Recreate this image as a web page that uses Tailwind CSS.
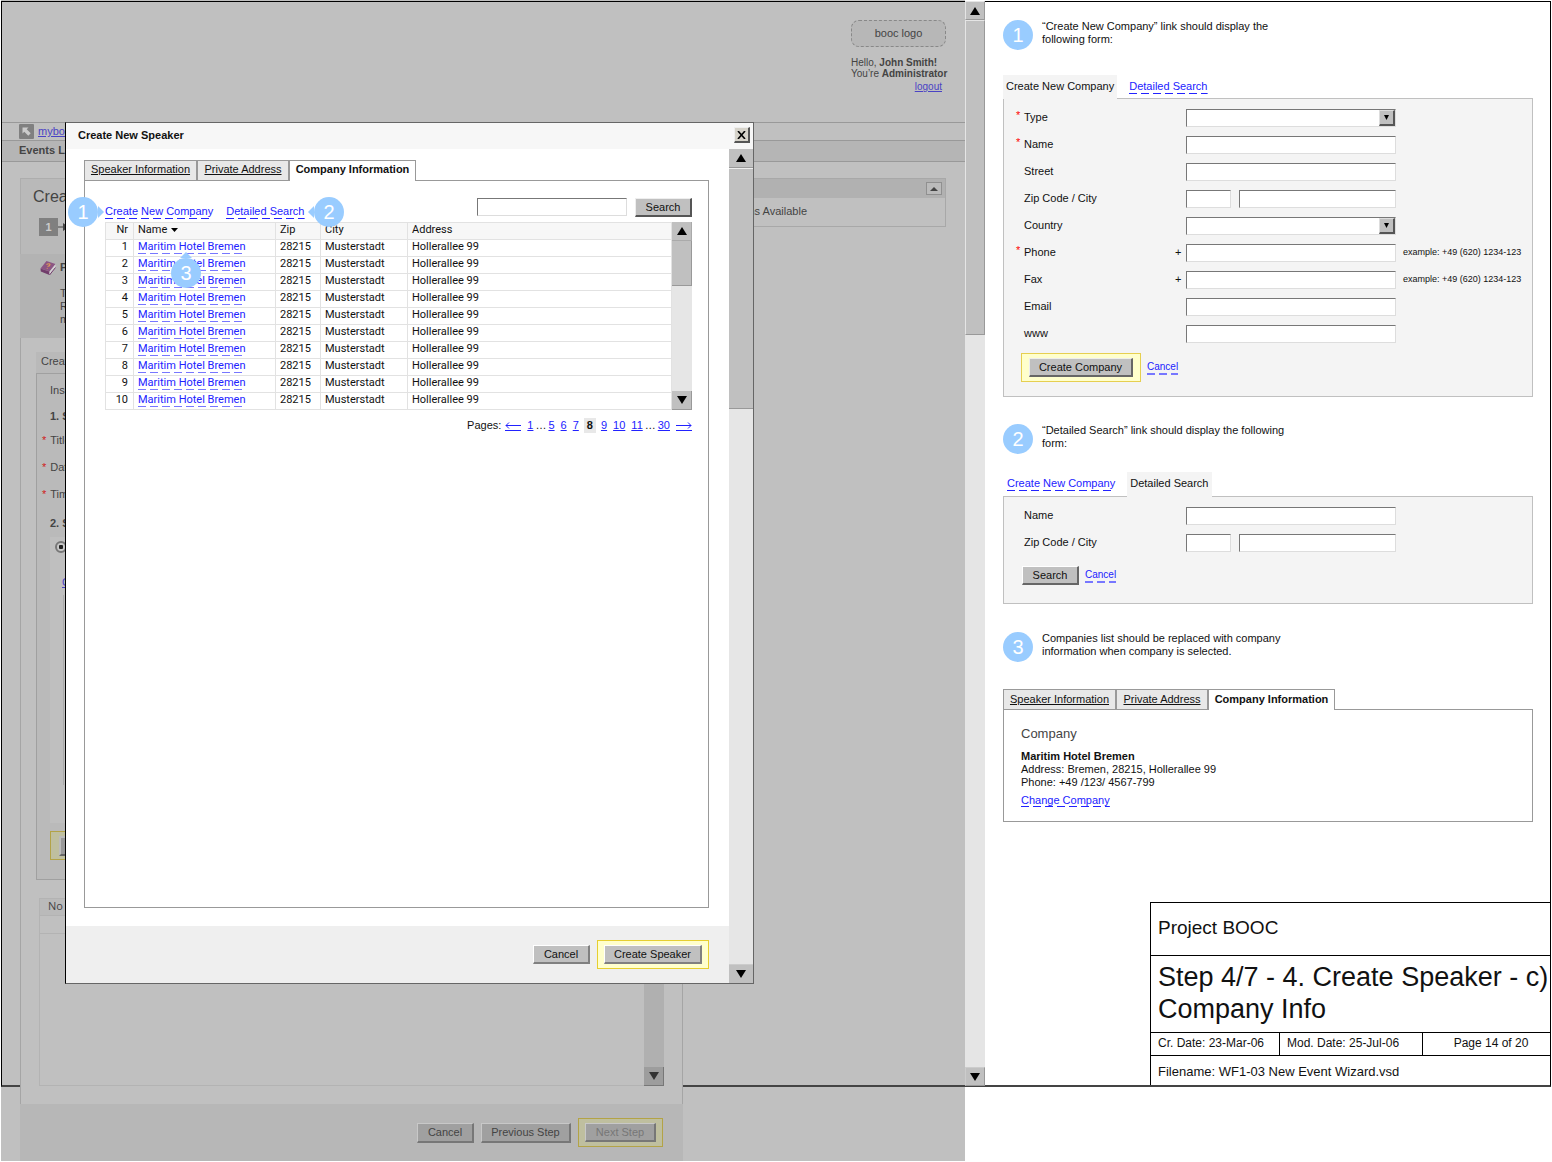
<!DOCTYPE html>
<html lang="en">
<head>
<meta charset="utf-8">
<title>Project BOOC - Create Speaker</title>
<script src="https://cdn.jsdelivr.net/npm/@tailwindcss/browser@4"></script>
</head>
<body class="bg-white font-['Liberation_Sans',Arial,sans-serif] text-[11px] leading-[13px] text-[#111]">
<div class="relative grid grid-cols-[minmax(0,964fr)_20px_minmax(0,567fr)] items-start pl-px">

  <!-- Drawing frame -->
  <div class="pointer-events-none absolute inset-x-px top-px h-[1086px] border border-b-2 border-black border-b-[#444]"></div>

  <!-- Dimmed application page -->
  <section class="min-h-[1161px] bg-[#c0c0c0] text-[#444]">
    <header class="flex h-[122px] justify-end pt-5 pr-[19px]">
      <div class="w-[95px]">
        <div class="flex h-[27px] items-center justify-center rounded-lg border border-dashed border-[#888] bg-[#b7b7b7]">booc logo</div>
        <p class="mt-[10px] text-[10px] leading-[11px] whitespace-nowrap">Hello, <b>John Smith!</b><br>You’re <b>Administrator</b></p>
        <p class="pr-1 text-right text-[10px] leading-[15px]"><a href="#" class="text-[#4a43c4] underline">logout</a></p>
      </div>
    </header>
    <nav class="border-y border-[#999]">
      <div class="flex h-[18px] items-center gap-1 border-b border-[#999] pl-[18px]">
        <svg class="h-[15px] w-[15px]" viewBox="0 0 15 15"><rect width="15" height="15" rx="1" fill="#808080"/><path d="M3.5 3.5h6L7.7 5.3l4 4-2.4 2.4-4-4-1.8 1.8z" fill="#ccc"/></svg>
        <a href="#" class="text-[#4a43c4] underline">mybooc</a>
      </div>
      <div class="flex h-5 items-center bg-[#b5b5b5] pb-[2px] pl-[18px] font-bold">Events List</div>
    </nav>
    <div class="flex items-start pt-[16px] pr-[19px] pl-[19px]">
      <div class="relative z-10 w-[663px] shrink-0 bg-[#c0c0c0]">
        <div class="h-[76px] border border-b-0 border-[#adadad] bg-[#b9b9b9] pl-3">
          <h1 class="pt-[9px] text-base leading-[18px]">Create Event</h1>
          <div class="mt-3 ml-[6px] flex items-center">
            <span class="flex h-[18px] w-[19px] items-center justify-center bg-[#808080] font-bold text-[#ccc]">1</span>
            <svg class="h-2 w-3" viewBox="0 0 12 8"><path d="M0 4h7" stroke="#444"/><path d="M5 0l6 4-6 4z" fill="#444"/></svg>
          </div>
        </div>
        <div class="flex h-[84px] gap-1 bg-[#b3b3b3] pt-[6px] pl-5">
          <svg class="h-4 w-4 shrink-0" viewBox="0 0 16 16"><path d="M0.500 8.500L6.500 1 15.500 4 9.500 11.500z" fill="#8c5583"/><path d="M0.500 8.500l9 3V15L0.800 11.500z" fill="#713d6b"/><path d="M9.500 11.800l6-7.500V7.500l-6 7.200z" fill="#d5d0d5"/><path d="M9.500 15l6-7.500" fill="none" stroke="#713d6b"/><path d="M6.500 4.500q3-1.500 3.500 0 0 1.500-2.500 2M6.800 8.300l.8.200" fill="none" stroke="#dc9a58" stroke-width="1.200"/></svg>
          <div>
            <b class="leading-[15px]">Please</b>
            <p class="mt-3">To<br>Re<br>me</p>
          </div>
        </div>
        <div class="border-x border-[#a5a5a5] pr-[18px] pl-[15px]">
          <div class="pt-[14px]">
            <div class="flex h-[21px] w-20 items-center bg-[#b9b9b9] pb-[2px] pl-[5px]">Create</div>
            <div class="h-[507px] border border-[#a0a0a0] bg-[#bababa] pl-[13px]">
              <p class="pt-[10px]">Insert</p>
              <p class="pt-[13px] font-bold">1. Set</p>
              <p class="-ml-2 pt-[11px]"><span class="mr-1 text-[#d02020]">*</span>Title</p>
              <p class="-ml-2 pt-[14px]"><span class="mr-1 text-[#d02020]">*</span>Date</p>
              <p class="-ml-2 pt-[14px]"><span class="mr-1 text-[#d02020]">*</span>Time</p>
              <p class="pt-4 font-bold">2. Set</p>
              <div class="mt-[7px] h-[286px] bg-[#bfbfbf] pt-1 pl-[5px]">
                <input type="radio" checked aria-label="Speaker" class="block h-3 w-3 appearance-none rounded-full border-2 border-[#777] bg-[radial-gradient(#222_0_35%,#c8c8c8_45%)]">
                <a href="#" class="mt-[23px] ml-[7px] block text-[#4a43c4] underline">C</a>
                <div class="mt-[6px] ml-2 h-[190px] border-l border-[#aaa]"></div>
              </div>
              <div class="mt-2 h-[29px] w-20 border border-[#b3a347] bg-[#bfbf9f] px-2 py-1">
                <div class="h-5 border-2 border-[#666] border-t-[#bbb] border-l-[#bbb] bg-[#999]"></div>
              </div>
            </div>
          </div>
          <div class="mt-[18px] ml-[3px] flex h-[188px]">
            <div class="flex-1 border border-r-0 border-[#b3b3b3]">
              <div class="h-[17px] border-b border-[#b3b3b3] bg-[#bababa] pl-2 font-['Open_Sans',sans-serif]">No</div>
              <div class="h-[18px] border-b border-[#b3b3b3]"></div>
            </div>
            <div class="flex w-5 flex-col justify-end bg-[#b0b0b0]">
              <div class="flex h-[19px] items-center justify-center border-r border-b border-[#777] bg-[#9d9d9d]"><svg class="h-2 w-[10px]" viewBox="0 0 10 8"><path d="M0 0h10L5 8z" fill="#333"/></svg></div>
            </div>
          </div>
          <div class="h-[18px]"></div>
        </div>
        <div class="flex h-[57px] items-start justify-end gap-[7px] bg-[#b7b7b7] pt-[14px] pr-5">
          <button class="mt-[5px] h-5 w-[57px] border-2 border-t border-l border-[#777] border-t-[#c8c8c8] border-l-[#c8c8c8] bg-[#a0a0a0]">Cancel</button>
          <button class="mt-[5px] h-5 w-[90px] border-2 border-t border-l border-[#777] border-t-[#c8c8c8] border-l-[#c8c8c8] bg-[#a0a0a0]">Previous Step</button>
          <div class="h-[29px] border border-[#b3a347] bg-[#bfbf9f] px-[6px] py-1">
            <button disabled class="h-[19px] w-[71px] border-2 border-t border-l border-[#777] border-t-[#c8c8c8] border-l-[#c8c8c8] bg-[#a0a0a0] text-[#777]">Next Step</button>
          </div>
        </div>
      </div>
      <aside class="ml-5 h-[49px] flex-1 border border-[#a8a8a8]">
        <div class="flex h-[19px] items-center justify-end bg-[#b1b1b1] pr-[3px]">
          <button aria-label="Collapse" class="flex h-[13px] w-4 items-center justify-center border border-[#909090] bg-[#bbb]"><svg class="h-1 w-2" viewBox="0 0 8 4"><path d="M4 0l4 4H0z" fill="#444"/></svg></button>
        </div>
        <p class="pt-[7px] pr-[138px] text-right whitespace-nowrap">No Options Available</p>
      </aside>
    </div>
  </section>

  <!-- Page scrollbar -->
  <div class="z-10 mt-px flex h-[1085px] flex-col bg-[#e5e5e5]">
    <div class="flex h-[19px] items-center justify-center border border-[#999] border-t-[#e5e5e5] border-l-[#e5e5e5] bg-[#c0c0c0]"><svg class="h-2 w-[10px]" viewBox="0 0 10 8"><path d="M5 0l5 8H0z"/></svg></div>
    <div class="h-[315px] border border-[#999] border-t-[#e5e5e5] border-l-[#e5e5e5] bg-[#c0c0c0]"></div>
    <div class="mt-auto flex h-[19px] items-center justify-center border border-[#999] border-t-[#ccc] border-l-[#ccc] bg-[#c0c0c0]"><svg class="h-2 w-[10px]" viewBox="0 0 10 8"><path d="M0 0h10L5 8z"/></svg></div>
  </div>

  <!-- Notes column -->
  <section class="flex h-[1086px] flex-col pr-px pl-[18px]">
    <div class="flex h-[75px] gap-[9px] pt-5">
      <span class="flex h-[30px] w-[30px] shrink-0 items-center justify-center rounded-full bg-[#99ccff] text-xl text-white">1</span>
      <p class="w-[250px]">“Create New Company” link should display the following form:</p>
    </div>
    <div class="pr-[18px]">
      <div class="flex h-[24px] items-start">
        <span class="relative h-6 bg-[#f4f4f4] px-[3px] pt-[5px]">Create New Company</span>
        <a href="#" class="mt-[5px] ml-3 bg-[repeating-linear-gradient(90deg,#2222ff_0_8px,transparent_8px_12px)] bg-[length:100%_1px] bg-bottom bg-no-repeat pb-px text-[#2222ff]">Detailed Search</a>
      </div>
      <form id="create" class="-mt-px h-[299px] border border-[#c0c0c0] bg-[#f4f4f4] pt-[5px] pl-3"></form>
    </div>

    <div class="mt-[27px] flex h-12 gap-[9px]">
      <span class="flex h-[30px] w-[30px] shrink-0 items-center justify-center rounded-full bg-[#99ccff] text-xl text-white">2</span>
      <p class="w-[250px]">“Detailed Search” link should display the following form:</p>
    </div>
    <div class="pr-[18px]">
      <div class="flex h-[24px] items-start pl-1">
        <a href="#" class="mt-[5px] mr-3 bg-[repeating-linear-gradient(90deg,#2222ff_0_8px,transparent_8px_12px)] bg-[length:100%_1px] bg-bottom bg-no-repeat pb-px text-[#2222ff]">Create New Company</a>
        <span class="relative h-[25px] bg-[#f4f4f4] px-[3px] pt-[5px]">Detailed Search</span>
      </div>
      <form id="search" class="h-[108px] border border-[#c0c0c0] bg-[#f4f4f4] pt-[5px] pl-3"></form>
    </div>

    <div class="mt-7 flex h-[57px] gap-[9px]">
      <span class="flex h-[30px] w-[30px] shrink-0 items-center justify-center rounded-full bg-[#99ccff] text-xl text-white">3</span>
      <p class="w-[250px]">Companies list should be replaced with company information when company is selected.</p>
    </div>
    <div class="pr-[18px]">
      <div class="flex h-5">
        <a href="#" class="w-[113px] border border-b-0 border-[#999] bg-[#e8e8e8] pt-[3px] text-center underline">Speaker Information</a>
        <a href="#" class="w-[92px] border border-b-0 border-[#999] bg-[#e8e8e8] pt-[3px] text-center underline">Private Address</a>
        <span class="relative h-[21px] w-[127px] border border-b-0 border-[#999] bg-white pt-[3px] text-center font-bold">Company Information</span>
      </div>
      <div class="h-[113px] border border-[#999] pt-4 pl-[17px]">
        <h2 class="text-[13px] leading-4 text-[#444]">Company</h2>
        <p class="pt-2"><b>Maritim Hotel Bremen</b><br>Address: Bremen, 28215, Hollerallee 99<br>Phone: +49 /123/ 4567-799</p>
        <p class="pt-[5px]"><a href="#" class="bg-[repeating-linear-gradient(90deg,#2222ff_0_8px,transparent_8px_12px)] bg-[length:100%_1px] bg-bottom bg-no-repeat pb-px text-[#2222ff]">Change Company</a></p>
      </div>
    </div>

    <div class="mt-auto ml-[147px] border-t border-l border-black text-xs">
      <p class="h-[53px] border-b border-black pt-[15px] pl-[7px] text-[19px] leading-5">Project BOOC</p>
      <h2 class="h-[77px] border-b border-black pt-[5px] pl-[7px] text-[27px] leading-8 whitespace-nowrap">Step 4/7 - 4. Create Speaker - c)<br>Company Info</h2>
      <div class="grid h-[23px] grid-cols-[128fr_143fr_129fr] border-b border-black leading-[21px]">
        <span class="pl-[7px]">Cr. Date: 23-Mar-06</span>
        <span class="border-l border-black pl-[7px]">Mod. Date: 25-Jul-06</span>
        <span class="border-l border-black pl-2 text-center">Page 14 of 20</span>
      </div>
      <p class="h-[30px] pt-[7px] pl-[7px] text-[13px]">Filename: WF1-03 New Event Wizard.vsd</p>
    </div>
  </section>

  <!-- Create New Speaker dialog -->
  <div role="dialog" aria-label="Create New Speaker" class="absolute top-[122px] left-[65px] z-20 flex h-[862px] w-[689px] flex-col border border-[#666] border-l-black bg-white">
    <div class="flex h-[26px] items-center justify-between bg-[#f7f7f7] pr-[3px] pb-[2px] pl-3">
      <h2 class="font-bold">Create New Speaker</h2>
      <button aria-label="Close" class="flex h-4 w-4 items-center justify-center border-2 border-t border-l border-[#555] border-t-[#eee] border-l-[#eee] bg-[#d6d3ca]"><svg class="h-2 w-[9px]" viewBox="0 0 9 8"><path d="M1 0l7 8M8 0L1 8" stroke="#000" stroke-width="1.600"/></svg></button>
    </div>
    <div class="flex flex-1">
      <div class="flex flex-1 flex-col">
        <div class="flex-1 pt-[11px] pr-5 pb-[18px] pl-[18px]">
          <div class="flex h-5">
            <a href="#" class="w-[113px] border border-b-0 border-[#999] bg-[#e8e8e8] pt-[2px] text-center underline">Speaker Information</a>
            <a href="#" class="w-[92px] border border-b-0 border-[#999] bg-[#e8e8e8] pt-[2px] text-center underline">Private Address</a>
            <span class="relative h-[21px] w-[127px] border border-b-0 border-[#999] bg-white pt-[2px] text-center font-bold">Company Information</span>
          </div>
          <div class="h-[728px] border border-[#999] pt-[17px] pr-4 pl-5">
            <div class="flex h-6 items-start">
              <a href="#" class="mt-[7px] bg-[repeating-linear-gradient(90deg,#2222ff_0_8px,transparent_8px_12px)] bg-[length:100%_1px] bg-bottom bg-no-repeat pb-px text-[#2222ff]">Create New Company</a>
              <a href="#" class="mt-[7px] ml-[13px] bg-[repeating-linear-gradient(90deg,#2222ff_0_8px,transparent_8px_12px)] bg-[length:100%_1px] bg-bottom bg-no-repeat pb-px text-[#2222ff]">Detailed Search</a>
              <input type="text" aria-label="Search companies" class="ml-auto h-[18px] w-[150px] border border-[#ddd] border-t-[#777] border-l-[#777] bg-white">
              <button class="ml-2 h-[19px] w-[57px] border-2 border-t border-l border-[#555] border-t-[#eee] border-l-[#eee] bg-[#c0c0c0]">Search</button>
            </div>
            <div class="flex">
              <table class="w-[567px] table-fixed border-collapse font-[Roboto,Tahoma,sans-serif] text-[11px] leading-[14px]">
                <colgroup><col class="w-7"><col class="w-[142px]"><col class="w-[45px]"><col class="w-[87px]"><col></colgroup>
                <thead><tr class="h-[17px] bg-[#f7f7f7] text-left align-top">
                  <th class="border border-[#e2e2e2] pr-[5px] text-right font-normal">Nr</th>
                  <th class="border border-[#e2e2e2] pl-1 font-normal">Name <svg class="ml-px inline h-1 w-[7px]" viewBox="0 0 7 4"><path d="M0 0h7L3.500 4z"/></svg></th>
                  <th class="border border-[#e2e2e2] pl-1 font-normal">Zip</th>
                  <th class="border border-[#e2e2e2] pl-1 font-normal">City</th>
                  <th class="border border-[#e2e2e2] pl-1 font-normal">Address</th>
                </tr></thead>
                <tbody id="rows"></tbody>
              </table>
              <div class="flex w-5 flex-col bg-[#e6e6e6]">
                <div class="flex h-[19px] items-center justify-center border-r border-b border-[#aaa] bg-[#c0c0c0]"><svg class="h-2 w-[10px]" viewBox="0 0 10 8"><path d="M5 0l5 8H0z"/></svg></div>
                <div class="h-[45px] border-r border-b border-[#999] bg-[#c0c0c0]"></div>
                <div class="mt-auto flex h-[19px] items-center justify-center border-r border-b border-[#999] bg-[#c0c0c0]"><svg class="h-2 w-[10px]" viewBox="0 0 10 8"><path d="M0 0h10L5 8z"/></svg></div>
              </div>
            </div>
            <div class="flex items-center justify-end pt-2 text-[#2222ff]">
              <span class="mr-1 text-[#111]">Pages:</span>
              <a href="#" aria-label="Previous" class="border-b border-[#2222ff] pt-[2px] pb-px"><svg class="h-[7px] w-4" viewBox="0 0 16 7"><path d="M1 3.500h15M4 .5L1 3.500l3 3" fill="none" stroke="#22f"/></svg></a>
              <a href="#" class="ml-[6px] underline">1</a><span class="mx-[2px] text-[#111]">…</span>
              <a href="#" class="underline">5</a><a href="#" class="ml-[6px] underline">6</a><a href="#" class="ml-[6px] underline">7</a>
              <b class="ml-[5px] bg-[#e8e8e8] px-[3px] py-px text-[#111]">8</b>
              <a href="#" class="ml-[5px] underline">9</a><a href="#" class="ml-[6px] underline">10</a><a href="#" class="ml-[6px] underline">11</a><span class="mx-[2px] text-[#111]">…</span><a href="#" class="underline">30</a>
              <a href="#" aria-label="Next" class="ml-[6px] border-b border-[#2222ff] pt-[2px] pb-px"><svg class="h-[7px] w-4" viewBox="0 0 16 7"><path d="M0 3.500h15M12 .5l3 3-3 3" fill="none" stroke="#22f"/></svg></a>
            </div>
          </div>
        </div>
        <div class="flex h-[57px] items-start justify-end gap-[7px] bg-[#efefef] pt-[14px] pr-5">
          <button class="mt-[5px] h-[19px] w-[57px] border-2 border-t border-l border-[#808080] border-t-white border-l-white bg-[#c0c0c0]">Cancel</button>
          <div class="h-[29px] border border-[#e6cf30] bg-[#ffffcc] px-[6px] py-1">
            <button class="h-[19px] w-[98px] border-2 border-t border-l border-[#808080] border-t-white border-l-white bg-[#c0c0c0]">Create Speaker</button>
          </div>
        </div>
      </div>
      <div class="flex w-6 flex-col bg-[#e6e6e6]">
        <div class="flex h-[19px] items-center justify-center border-b border-[#999] bg-[#c0c0c0]"><svg class="h-2 w-[10px]" viewBox="0 0 10 8"><path d="M5 0l5 8H0z"/></svg></div>
        <div class="h-[241px] border-t border-b border-[#999] border-t-[#eee] bg-[#c0c0c0]"></div>
        <div class="mt-auto flex h-[19px] items-center justify-center border-t border-[#ccc] bg-[#c0c0c0]"><svg class="h-2 w-[10px]" viewBox="0 0 10 8"><path d="M0 0h10L5 8z"/></svg></div>
      </div>
    </div>

    <!-- Callout markers -->
    <div class="absolute top-[74px] left-[2px] flex items-center">
      <span class="flex h-[30px] w-[30px] items-center justify-center rounded-full bg-[#99ccff] text-xl text-white">1</span>
      <svg class="h-3 w-[6px]" viewBox="0 0 6 12"><path d="M0 0l6 6-6 6z" fill="#9cf"/></svg>
    </div>
    <div class="absolute top-[74px] left-[242px] flex items-center">
      <svg class="h-3 w-[6px]" viewBox="0 0 6 12"><path d="M6 0L0 6l6 6z" fill="#9cf"/></svg>
      <span class="flex h-[30px] w-[30px] items-center justify-center rounded-full bg-[#99ccff] text-xl text-white">2</span>
    </div>
    <div class="absolute top-[129px] left-[105px] flex flex-col items-center">
      <svg class="h-[6px] w-3" viewBox="0 0 12 6"><path d="M0 6l6-6 6 6z" fill="#9cf"/></svg>
      <span class="flex h-[30px] w-[30px] items-center justify-center rounded-full bg-[#99ccff] text-xl text-white">3</span>
    </div>
  </div>
</div>

<script>
  const cell = 'border border-[#e2e2e2] py-0 pl-1';
  document.getElementById('rows').innerHTML = Array.from({ length: 10 }, (_, i) => `
    <tr class="h-[17px] align-top">
      <td class="border border-[#e2e2e2] pr-[5px] text-right">${i + 1}</td>
      <td class="${cell}"><a href="#" class="block w-fit bg-[repeating-linear-gradient(90deg,#7777ff_0_8px,transparent_8px_12px)] bg-[length:100%_1px] bg-bottom bg-no-repeat text-[#2222ff]">Maritim Hotel Bremen</a></td>
      <td class="${cell}">28215</td><td class="${cell}">Musterstadt</td><td class="${cell}">Hollerallee 99</td>
    </tr>`).join('');

  const box = 'h-[18px] border border-[#ddd] border-t-[#777] border-l-[#777] bg-white';
  const row = ([label, kind, required], form) => {
    const id = form + '-' + label.split(' ')[0].toLowerCase();
    let field = `<input id="${id}" type="text" class="${box} w-[210px]">`;
    if (kind === 'select') field = `<span class="relative"><select id="${id}" class="${box} block w-[210px] appearance-none"></select><span class="pointer-events-none absolute top-px right-px flex h-4 w-4 items-center justify-center border-2 border-t border-l border-[#555] border-t-[#ddd] border-l-[#ddd] bg-[#c0c0c0]"><svg class="h-[5px] w-[5px]" viewBox="0 0 5 5"><path d="M0 0h5L2.500 5z"/></svg></span></span>`;
    if (kind === 'zip') field = `<input id="${id}" type="text" class="${box} mr-2 w-[45px]"><input type="text" aria-label="City" class="${box} w-[157px]">`;
    if (kind === 'phone') field += '<span class="ml-[7px] text-[9px] whitespace-nowrap">example: +49 (620) 1234-123</span>';
    return `<div class="flex h-[27px] items-center">
      <span class="w-2 pb-1 text-[#ff0000]">${required ? '*' : ''}</span>
      <label for="${id}" class="w-[151px]">${label}</label>
      <span class="w-[11px]">${kind === 'phone' ? '+' : ''}</span>${field}</div>`;
  };
  document.getElementById('create').innerHTML = [
    ['Type', 'select', 1], ['Name', 'text', 1], ['Street'], ['Zip Code / City', 'zip'], ['Country', 'select'],
    ['Phone', 'phone', 1], ['Fax', 'phone'], ['Email'], ['www']
  ].map(r => row(r, 'create')).join('') + `
    <div class="ml-[5px] flex items-center gap-[6px] pt-[6px]">
      <div class="h-[29px] border border-[#e6cf50] bg-[#ffffcc] px-[7px] py-1">
        <button type="button" class="h-[19px] w-[104px] border-2 border-t border-l border-[#666] border-t-[#eee] border-l-[#eee] bg-[#c0c0c0]">Create Company</button>
      </div>
      <a href="#" class="bg-[repeating-linear-gradient(90deg,#7777ff_0_8px,transparent_8px_12px)] bg-[length:100%_2px] bg-bottom bg-no-repeat pb-[2px] text-[10px] text-[#2222ff]">Cancel</a>
    </div>`;
  document.getElementById('search').innerHTML = [['Name'], ['Zip Code / City', 'zip']].map(r => row(r, 'search')).join('') + `
    <div class="ml-[6px] flex items-center gap-[6px] pt-[10px]">
      <button type="button" class="h-[19px] w-[57px] border-2 border-t border-l border-[#666] border-t-white border-l-white bg-[#c0c0c0]">Search</button>
      <a href="#" class="bg-[repeating-linear-gradient(90deg,#7777ff_0_8px,transparent_8px_12px)] bg-[length:100%_2px] bg-bottom bg-no-repeat pb-[2px] text-[10px] text-[#2222ff]">Cancel</a>
    </div>`;
</script>
</body>
</html>
